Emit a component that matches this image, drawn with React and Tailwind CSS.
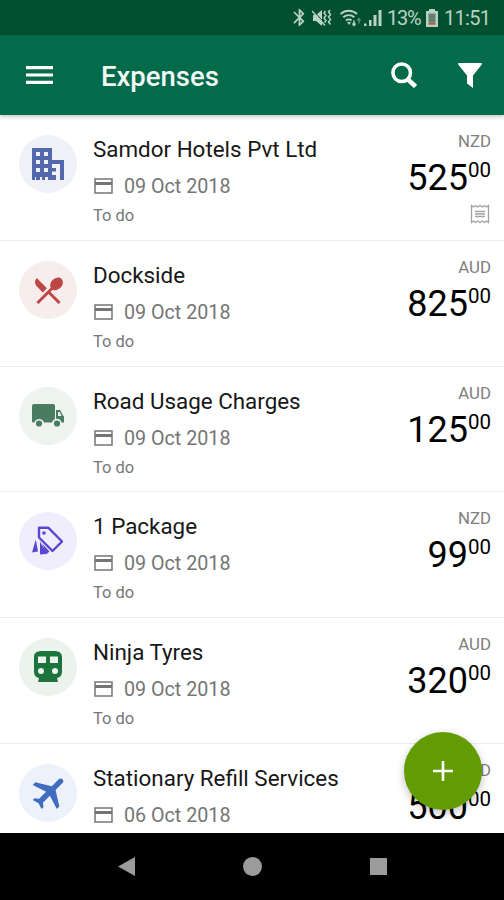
import { MdBluetooth, MdRestaurantMenu, MdFlight } from 'react-icons/md';

const expenses = [
  { title: 'Samdor Hotels Pvt Ltd', date: '09 Oct 2018', status: 'To do', currency: 'NZD', amount: '525', icon: BuildingIcon, color: 'bg-[#eff1f7] text-[#5268ac]', receipt: true },
  { title: 'Dockside', date: '09 Oct 2018', status: 'To do', currency: 'AUD', amount: '825', icon: FoodIcon, color: 'bg-[#f8eded] text-[#be4644]' },
  { title: 'Road Usage Charges', date: '09 Oct 2018', status: 'To do', currency: 'AUD', amount: '125', icon: TruckIcon, color: 'bg-[#eff3f0] text-[#4a7c62]' },
  { title: '1 Package', date: '09 Oct 2018', status: 'To do', currency: 'NZD', amount: '99', icon: TagIcon, color: 'bg-[#f0eefc] text-[#5a48d0]' },
  { title: 'Ninja Tyres', date: '09 Oct 2018', status: 'To do', currency: 'AUD', amount: '320', icon: TrainIcon, color: 'bg-[#ebf3ee] text-[#1c733b]' },
  { title: 'Stationary Refill Services', date: '06 Oct 2018', currency: 'NZD', amount: '500', icon: PlaneIcon, color: 'bg-[#edf1f9] text-[#416dc0]' },
];

function BuildingIcon() {
  return (
    <svg viewBox="0 0 32 32" className="w-8 h-8" fill="currentColor" fillRule="evenodd">
      <path d="M0 0h20v12h12v20h-4V16h-4v16H16v-3h-3v3H10v-3H8v3H4v-3H3v3H0zM4 4v4h4V4zM12 4v4h4V4zM4 12v4h4v-4zM12 12v4h4v-4zM4 20v4h4v-4zM12 20v4h4v-4zM20 16v4h4v-4zM20 23.500v3.500h4v-3.500z" />
    </svg>
  );
}

function FoodIcon() {
  return <MdRestaurantMenu className="mt-px w-[35px] h-[35px]" />;
}

function TruckIcon() {
  return (
    <svg viewBox="0 0 32 24" className="w-8 h-6" fill="currentColor">
      <path fillRule="evenodd" d="M2 0h19a2 2 0 0 1 2 2v13a5 5 0 0 0-3 3.500h-8a5 5 0 0 0-9.600 0H1a1 1 0 0 1-1-1V2a2 2 0 0 1 2-2zM24 6h4l3 5.500 1 1v6h-2.400A5 5 0 0 0 24 14.800zM26 8v4h3.600L27.600 8z" />
      <circle cx="7" cy="19.500" r="3.100" />
      <circle cx="25" cy="19.500" r="3.100" />
    </svg>
  );
}

function TagIcon() {
  return (
    <svg viewBox="0 0 32 30" className="w-8 h-[30px]" fill="currentColor">
      <path d="M7 1.800h9.500L30 15.500 20.500 25 7 11.500z" fill="none" stroke="currentColor" strokeWidth="2.400" strokeLinejoin="round" />
      <circle cx="12" cy="7" r="1.800" />
      <path d="M3.800 13.500L6 25.500 0 26.500z" />
      <path d="M8 15.500L13.500 25 14 28 8 28.500z" />
      <path d="M10.500 18L17.500 25.500 14 28.500z" />
    </svg>
  );
}

function TrainIcon() {
  return (
    <svg viewBox="0 0 28 32" className="w-7 h-8" fill="currentColor" fillRule="evenodd">
      <path d="M8 0h12c5 0 8 2 8 6v15c0 3.500-2 5.500-5 6l1 4H4l1-4c-3-.500-5-2.500-5-6V6c0-4 3-6 8-6zM4 5.500v6.500h8V5.500zM16 5.500v6.500h8V5.500zM7 17a3 3 0 1 0 0 6 3 3 0 0 0 0-6zM21 17a3 3 0 1 0 0 6 3 3 0 0 0 0-6z" />
    </svg>
  );
}

function PlaneIcon() {
  return <MdFlight className="ml-[4px] w-[43px] h-[43px] shrink-0 rotate-45" />;
}

function CardIcon() {
  return (
    <svg viewBox="0 0 19 16" className="w-[19px] h-4">
      <path d="M1 1h17v14H1z" fill="none" stroke="currentColor" strokeWidth="1.500" />
      <path d="M1 4h17v3H1z" fill="currentColor" />
    </svg>
  );
}

function ReceiptIcon() {
  return (
    <svg viewBox="0 0 20 20" className="w-5 h-5" fill="none" stroke="#a3a3a3" strokeWidth="1.300">
      <path d="M1.500 1.500l2 1.500 2-1.500 2 1.500 2.500-1.500 2.500 1.500 2-1.500 2 1.500 2-1.500v17l-2-1.500-2 1.500-2-1.500-2.500 1.500-2.500-1.500-2 1.500-2-1.500-2 1.500z" />
      <path d="M5 7.500h10M5 10h10M5 12.500h10" />
    </svg>
  );
}

function StatusBar() {
  return (
    <header className="h-[35px] shrink-0 bg-[#02502f] text-[#b9d2c5] flex items-center justify-end pr-[14px]">
      <MdBluetooth className="w-[21px] h-[21px] mr-[2px]" />
      <svg viewBox="0 0 20 18" className="w-5 h-[18px] mr-[8px]" fill="currentColor">
        <path d="M1 6h3l6-5v16l-6-5H1z" />
        <path d="M1 1l13 15" stroke="#02502f" strokeWidth="1" />
        <path d="M0 2l13 14.500" fill="none" stroke="currentColor" strokeWidth="1.500" />
        <path d="M13.500 2l-1.500 2 2 2.500-2 2.500 2 2.500-1.500 2M18 1l-1.500 2 2 2.500-2 2.500 2 2.500-2 2.500 2 2.500" fill="none" stroke="currentColor" strokeWidth="1.500" />
      </svg>
      <svg viewBox="0 0 22 18" className="w-[22px] h-[18px] mr-[2px]" fill="none" stroke="currentColor" strokeWidth="1.900">
        <path d="M.500 5a12 12 0 0 1 16.500 0M3.300 8.300a8 8 0 0 1 11 0M6 11.500a4 4 0 0 1 5.500 0" />
        <path d="M7 13h4l-2 3z" fill="currentColor" stroke="none" />
        <path d="M14 11.500v5M12.500 14.500l1.500 2 1.500-2" strokeWidth="1.500" />
        <path d="M19 14.500v-5M17.500 11.500l1.500-2 1.500 2" strokeWidth="1.300" opacity=".5" />
      </svg>
      <svg viewBox="0 0 18 18" className="w-[18px] h-[18px] mr-[5px]" fill="currentColor">
        <path d="M0 14.500h2.500V17H0zM5 11h2.500v6H5zM9.500 6h3v11h-3zM14.500 1h3v16h-3z" />
      </svg>
      <span className="w-[34px] text-[20px] tracking-[-1.200px] whitespace-nowrap">13%</span>
      <svg viewBox="0 0 12 18" className="w-3 h-[18px] ml-[5px] mr-[6px]">
        <path d="M3 0h6v2h3v16H0V2h3z" fill="currentColor" />
        <path d="M2.500 4.500h7v9h-7z" fill="#65806f" />
        <path d="M2.500 13.500h7v2.300h-7z" fill="#a76538" />
      </svg>
      <span className="w-[46px] text-[20px] tracking-[-0.700px] whitespace-nowrap">11:51</span>
    </header>
  );
}

function AppBar() {
  return (
    <nav className="relative z-10 h-20 shrink-0 bg-[#046b4a] text-white flex items-center pl-[26px] pr-[22px] shadow-[0_2px_4px_rgba(0,0,0,0.22)]">
      <svg viewBox="0 0 27 18" className="w-[27px] h-[18px] mb-px" fill="currentColor">
        <path d="M0 0h27v3.200H0zM0 7.400h27v3.200H0zM0 14.800h27V18H0z" />
      </svg>
      <h1 className="ml-[48px] pt-[3px] text-[27.500px] leading-8 font-medium text-[#f2f8f5]">Expenses</h1>
      <svg viewBox="0 0 26 26" className="w-[26px] h-[26px] ml-auto mr-[41px]" fill="none" stroke="currentColor">
        <circle cx="10.700" cy="10.700" r="8.800" strokeWidth="3.500" />
        <path d="M17 17.500l7.500 7" strokeWidth="4.500" />
      </svg>
      <svg viewBox="0 0 24 25" className="w-6 h-[25px]" fill="currentColor">
        <path d="M.500 0h23q.500.500.300 1.500L15 12.500V25l-6-4.500v-8L.200 1.500Q0 .500.500 0z" />
      </svg>
    </nav>
  );
}

function ExpenseRow({ expense }) {
  const Icon = expense.icon;
  return (
    <li className="h-[125.8px] shrink-0 flex items-start pl-[19px] pr-[13px] border-b border-[#ededed]">
      <div className={`mt-5 w-[58px] h-[58px] shrink-0 rounded-full flex items-center justify-center ${expense.color}`}>
        <Icon />
      </div>
      <div className="ml-4 pt-[20px]">
        <h2 className="text-[22.400px] leading-7 text-[#171717] whitespace-nowrap">{expense.title}</h2>
        <div className="mt-[12px] ml-px flex items-center gap-[11px] text-[#757575]">
          <span className="mb-[2px]"><CardIcon /></span>
          <span className="text-[19.700px] leading-6">{expense.date}</span>
        </div>
        {expense.status && <p className="mt-[7px] text-[16.500px] leading-5 text-[#777777]">{expense.status}</p>}
      </div>
      <div className="ml-auto pt-[16px] flex flex-col items-end">
        <span className="text-[16.800px] leading-5 text-[#808080]">{expense.currency}</span>
        <div className="mt-[6px] flex items-start text-black">
          <span className="text-[36px] leading-[42px]">{expense.amount}</span>
          <span className="text-[20.500px] leading-[27px]">00</span>
        </div>
        {expense.receipt && <div className="mt-[5px] mr-px"><ReceiptIcon /></div>}
      </div>
    </li>
  );
}

function NavigationBar() {
  return (
    <footer className="h-[67px] shrink-0 bg-black flex items-center pl-[118px] text-[#9b9b9b]">
      <svg viewBox="0 0 17 19" className="w-[17px] h-[19px]" fill="currentColor">
        <path d="M17 0v19L0 9.500z" />
      </svg>
      <div className="ml-[108px] w-[19px] h-[19px] rounded-full bg-[#9b9b9b]" />
      <div className="ml-[108px] w-[17px] h-[17px] bg-[#9b9b9b]" />
    </footer>
  );
}

export default function App() {
  return (
    <div className="relative w-[504px] h-[900px] flex flex-col overflow-hidden bg-white font-['Roboto',sans-serif]">
      <StatusBar />
      <AppBar />
      <ul className="flex-1 min-h-0 flex flex-col overflow-hidden">
        {expenses.map((expense) => (
          <ExpenseRow key={expense.title} expense={expense} />
        ))}
      </ul>
      <button
        aria-label="Add expense"
        className="absolute right-[22px] bottom-[90px] w-[78px] h-[78px] rounded-full bg-[#639b02] text-white flex items-center justify-center shadow-[0_3px_8px_rgba(0,0,0,0.25)]"
      >
        <svg viewBox="0 0 20 20" className="w-5 h-5" fill="currentColor">
          <path d="M8.700 0h2.600v8.700H20v2.600h-8.700V20H8.700v-8.700H0V8.700h8.700z" />
        </svg>
      </button>
      <NavigationBar />
    </div>
  );
}
